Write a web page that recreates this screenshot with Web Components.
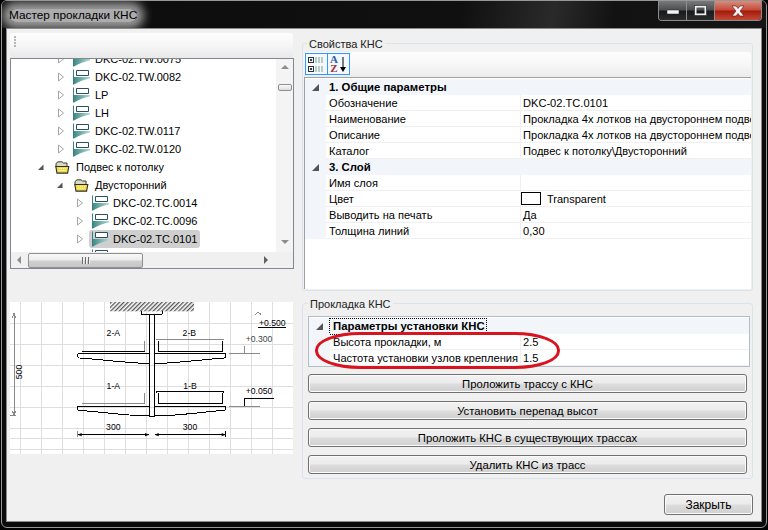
<!DOCTYPE html>
<html>
<head>
<meta charset="utf-8">
<title>Мастер прокладки КНС</title>
<style>
  html, body { margin: 0; padding: 0; background: #000; }
  body { width: 768px; height: 530px; overflow: hidden; font: 11.2px "Liberation Sans", sans-serif; color: #000; }
</style>
</head>
<body>
<kns-window caption="Мастер прокладки КНС">
  <div slot="left">
    <tree-panel>
      <tree-item level="1" kind="tray" arrow="open">DKC-02.TW.0075</tree-item>
      <tree-item level="1" kind="tray" arrow="open">DKC-02.TW.0082</tree-item>
      <tree-item level="1" kind="tray" arrow="open">LP</tree-item>
      <tree-item level="1" kind="tray" arrow="open">LH</tree-item>
      <tree-item level="1" kind="tray" arrow="open">DKC-02.TW.0117</tree-item>
      <tree-item level="1" kind="tray" arrow="open">DKC-02.TW.0120</tree-item>
      <tree-item level="0" kind="folder" arrow="solid">Подвес к потолку</tree-item>
      <tree-item level="1" kind="folder" arrow="solid">Двусторонний</tree-item>
      <tree-item level="2" kind="tray" arrow="open">DKC-02.TC.0014</tree-item>
      <tree-item level="2" kind="tray" arrow="open">DKC-02.TC.0096</tree-item>
      <tree-item level="2" kind="tray" arrow="open" selected>DKC-02.TC.0101</tree-item>
      <tree-item level="2" kind="tray"></tree-item>
    </tree-panel>
    <scheme-view></scheme-view>
  </div>
  <div slot="right">
    <group-box caption="Свойства КНС" style="height:248px;--cap-left:4px">
      <sort-toolbar></sort-toolbar>
      <prop-grid style="height:212px;padding-top:1px">
        <prop-head>1. Общие параметры</prop-head>
        <prop-row name="Обозначение">DKC-02.TC.0101</prop-row>
        <prop-row name="Наименование">Прокладка 4х лотков на двустороннем подвесе</prop-row>
        <prop-row name="Описание">Прокладка 4х лотков на двустороннем подвесе</prop-row>
        <prop-row name="Каталог">Подвес к потолку\Двусторонний</prop-row>
        <prop-head>3. Слой</prop-head>
        <prop-row name="Имя слоя"></prop-row>
        <prop-row name="Цвет"><color-chip>Transparent</color-chip></prop-row>
        <prop-row name="Выводить на печать">Да</prop-row>
        <prop-row name="Толщина линий">0,30</prop-row>
      </prop-grid>
    </group-box>
    <group-box caption="Прокладка КНС" style="height:176px;margin-top:12px" variant="inset">
      <prop-grid style="height:51px;margin-top:6px;--nw:190px" compact>
        <prop-head focus>Параметры установки КНС</prop-head>
        <prop-row name="Высота прокладки, м">2.5</prop-row>
        <prop-row name="Частота установки узлов крепления">1.5</prop-row>
        <red-ring></red-ring>
      </prop-grid>
      <win-button style="margin-top:7px">Проложить трассу с КНС</win-button>
      <win-button style="margin-top:8px">Установить перепад высот</win-button>
      <win-button style="margin-top:8px">Проложить КНС в существующих трассах</win-button>
      <win-button style="margin-top:8px">Удалить КНС из трасс</win-button>
    </group-box>
    <div style="display:flex;justify-content:flex-end;margin-top:15px;width:451px">
      <win-button style="width:89px;height:21px;flex:none;font-size:12px">Закрыть</win-button>
    </div>
  </div>
</kns-window>

<script>
function define(name, css, html, setup) {
  customElements.define(name, class extends HTMLElement {
    connectedCallback() {
      if (this.shadowRoot) return;
      const root = this.attachShadow({ mode: 'open' });
      const body = typeof html === 'function' ? html(this) : html;
      root.innerHTML = '<style>' + css + '</style>' + body;
      if (setup) setup(this, root);
    }
  });
}

// Main window
define('kns-window', `
  :host { display: block; width: 768px; height: 530px; background: #020202; overflow: hidden; }
  .frame { margin: 0 1px; height: 528px; box-sizing: border-box; border: 1px solid #979797; border-radius: 6px; background: #0a0a0a; overflow: hidden; }
  .title { height: 27px; display: flex; align-items: flex-start; justify-content: space-between; overflow: hidden;
    background: linear-gradient(100deg, #0c0c0c 0, #101010 60%, #2a2a2a 72%, #121212 80%, #151515 100%); }
  .cap { margin: 8px 0 0 7px; height: 13px; line-height: 13px; font-size: 11.8px; background: rgba(190,190,190,.9); box-shadow: 0 0 10px 7px rgba(190,190,190,.8); border-radius: 7px; }
  .btns { display: flex; margin: 0 4px 0 0; height: 20px; border: 1px solid #8d8d8d; border-top: 0; border-radius: 0 0 4px 4px; overflow: hidden; box-sizing: border-box; width: 104px; }
  .btns div { display: flex; align-items: center; justify-content: center; border-right: 1px solid #8d8d8d;
    background: linear-gradient(#77797c, #4b4d50 48%, #17191b 52%, #2a2c2e); }
  .min, .max { width: 27px; }
  .close { flex: 1; border-right: 0 !important; background: linear-gradient(#d98c7f, #c44a38 48%, #a4190c 52%, #c24a35) !important; }
  .client { margin: 0 4px; height: 494px; box-sizing: border-box; border: 1px solid #8b8b8b; background: #f0f0f0; display: grid; grid-template-columns: 287px 1fr; }
  .left { padding: 4px 0 0 3px; }
  .right { padding: 14px 0 0 8px; }
`, w => `
  <div class="frame">
    <div class="title">
      <span class="cap">${w.getAttribute('caption')}</span>
      <div class="btns">
        <div class="min"><svg width="12" height="6"><rect x="0" y="2" width="12" height="4" fill="#f4f4f4" stroke="#222" stroke-width=".5"/></svg></div>
        <div class="max"><svg width="13" height="11"><rect x="1.5" y="1.5" width="10" height="8" fill="none" stroke="#f0f0f0" stroke-width="2"/><rect x=".5" y=".5" width="12" height="10" fill="none" stroke="#222" stroke-width=".6"/></svg></div>
        <div class="close"><svg width="18" height="12" viewBox="0 0 18 12"><path d="M3 1h4l2 2.5L11 1h4l-4 5 4 5h-4L9 8.5 7 11H3l4-5z" fill="#f6f6f6" stroke="#5c1a12" stroke-width=".6"/></svg></div>
      </div>
    </div>
    <div class="client">
      <div class="left"><slot name="left"></slot></div>
      <div class="right"><slot name="right"></slot></div>
    </div>
  </div>`);

// Tree on the left with toolbar and scrollbars
define('tree-panel', `
  :host { display: block; width: 284px; }
  .bar { height: 25px; margin-right: 1px; box-sizing: border-box; padding: 3px 0 0 4px; border-radius: 3px 3px 0 0; background: linear-gradient(#fdfdfd, #f6f6f6 50%, #e9e9e9); }
  .bar i { display: block; width: 2px; height: 2px; background: #b5b5b5; margin-bottom: 1px; }
  .box { height: 211px; box-sizing: border-box; border: 1px solid #828790; background: #fff; display: grid; grid-template-columns: 1fr 17px; grid-template-rows: 193px 16px; }
  .view { overflow: hidden; grid-column: 1; grid-row: 1; }
  .inner { margin-top: -9px; }
  .v { grid-column: 2; grid-row: 1; background: #f4f4f4; display: flex; flex-direction: column; align-items: center; }
  .h { grid-column: 1; grid-row: 2; background: #f0f0f0; display: flex; align-items: center; }
  .c { grid-column: 2; grid-row: 2; background: #f0f0f0; }
  .up { margin-top: 6px; width: 0; height: 0; border: 4px solid transparent; border-top: 0; border-bottom-color: #8d8d8d; }
  .dn { margin-top: 149px; width: 0; height: 0; border: 4px solid transparent; border-bottom: 0; border-top-color: #8d8d8d; }
  .vt { margin-top: 15px; width: 14px; height: 7px; box-sizing: border-box; border: 1px solid #8f8f8f; border-radius: 2px; background: linear-gradient(#fafafa, #dcdcdc); }
  .lf { margin-left: 6px; width: 0; height: 0; border: 4px solid transparent; border-left: 0; border-right-color: #8d8d8d; }
  .rt { margin-left: 121px; width: 0; height: 0; border: 4px solid transparent; border-right: 0; border-left-color: #606060; }
  .ht { margin-left: 7px; width: 115px; height: 15px; flex: none; box-sizing: border-box; border: 1px solid #8f8f8f; border-radius: 2px; background: linear-gradient(#f8f8f8, #ededed 48%, #d0d0d0 52%, #c6c6c6); display: flex; align-items: center; justify-content: center; gap: 1px; }
  .ht b { width: 1px; height: 7px; background: #6b6b6b; box-shadow: 1px 0 #eee; margin-right: 1px; }
`, `
  <div class="bar"><i></i><i></i><i></i><i></i></div>
  <div class="box">
    <div class="view"><div class="inner"><slot></slot></div></div>
    <div class="v"><div class="up"></div><div class="vt"></div><div class="dn"></div></div>
    <div class="h"><div class="lf"></div><div class="ht"><b></b><b></b><b></b></div><div class="rt"></div></div>
    <div class="c"></div>
  </div>`);

define('tree-item', `
  :host { display: flex; align-items: center; height: 18px; white-space: nowrap; font-size: 11px; }
  .arr { width: 8px; height: 10px; flex: none; }
  .ico { flex: none; display: block; }
  .lab { display: flex; align-items: center; height: 18px; padding-right: 3px; }
  .wrap { display: flex; align-items: center; height: 18px; border-radius: 3px; padding-left: 3px; }
  .sel { background: #cfcfcf; }
`, it => {
  const level = +it.getAttribute('level');
  const tray = it.getAttribute('kind') === 'tray';
  const a = it.getAttribute('arrow');
  const left = { 0: 26, 1: tray ? 46 : 45, 2: 65 }[level];
  const arrow = a === 'open'
    ? '<svg class="arr" viewBox="0 0 8 10"><path d="M1.5 1v8l5-4z" fill="#fff" stroke="#a6a6a6"/></svg>'
    : a === 'solid'
      ? '<svg class="arr" viewBox="0 0 8 10"><path d="M6.5 2.5v5.5H1z" fill="#555"/></svg>'
      : '<span class="arr"></span>';
  const icon = tray
    ? `<svg class="ico" width="17" height="16" viewBox="0 0 17 16">
        <defs><linearGradient id="t" x1="0" y1="0" x2="1" y2="0"><stop offset="0" stop-color="#3f8b88"/><stop offset="1" stop-color="#b4dad3"/></linearGradient></defs>
        <path d="M.5 .5V15.5" stroke="#3c7d80" stroke-width="1"/>
        <path d="M1 8H17V9.5C11 10.5 6 12.5 1 15.5z" fill="url(#t)"/>
        <path d="M3.5 1.5H15.5V6.5H3.5z" fill="#fff" stroke="#2a4f63" stroke-width="1"/>
      </svg>`
    : `<svg class="ico" width="15" height="13" viewBox="0 0 15 13">
        <path d="M1 2.5L3 .8h4l1.5 1.2H12V6H1z" fill="#d9d9c8" stroke="#3d3d30" stroke-width="1"/>
        <path d="M.8 5.5h13l-1.2 6.6H2z" fill="#f0dc48" stroke="#2e2e26" stroke-width="1.1"/>
        <path d="M4 7.5h7M3.6 9.5h7.5" stroke="#fffbd0" stroke-width="1" stroke-dasharray="1 1"/>
      </svg>`;
  const selected = it.hasAttribute('selected') ? ' sel' : '';
  const pad = tray ? (level === 2 ? 4 : 5) : 6;
  return `<span style="width:${left}px;flex:none"></span>${arrow}
    <div class="wrap${selected}" style="margin-left:${tray ? 5 : 7}px">${icon}
      <span class="lab" style="padding-left:${pad}px"><slot></slot></span></div>`;
});

// Drawing of the suspension
define('scheme-view', `
  :host { display: block; width: 283px; height: 152px; margin-top: 33px; }
  svg { display: block; }
  text { font-family: "Liberation Sans", sans-serif; font-size: 26px; text-anchor: middle; }
`, (() => {
  let grid = '';
  for (let x = 65; x < 882; x += 63) grid += `<path d="M${x} 22V477"/>`;
  [85, 148, 211, 274, 337, 400, 432, 463].forEach(y => { grid += `<path d="M33 ${y}H882"/>`; });
  return `<svg width="283" height="152" viewBox="33 22 849 456">
    <defs><pattern id="h" width="9" height="9" patternUnits="userSpaceOnUse" patternTransform="rotate(45)"><rect width="9" height="9" fill="#fff"/><rect width="4" height="9" fill="#555"/></pattern></defs>
    <rect x="33" y="22" width="849" height="456" fill="#fff"/>
    <g stroke="#dedede" stroke-width="3" shape-rendering="crispEdges">${grid}</g>
    <rect x="333" y="22" width="252" height="28" fill="url(#h)"/>
    <g fill="none" stroke="#000" stroke-width="3" shape-rendering="crispEdges">
      <path d="M427 50V56Q427 60 432 60H485Q490 60 490 56V50"/>
      <path d="M451 60V364H467V60"/>
      <path d="M451 175H241Q236 175 236 182Q236 190 241 190C310 195 390 205 451 207"/>
      <path d="M467 175H680V182Q680 190 675 190C610 195 530 205 467 207"/>
      <path d="M451 334H236V344Q236 347 241 347C310 352 390 364 451 364"/>
      <path d="M467 334H680V344Q680 347 675 347C610 352 530 364 467 364"/>
      <path d="M250 169H437" />
      <path d="M478 140V169H670V140"/>
      <path d="M472 296V290H674V296"/>
      <path d="M478 296V327H670V296"/>
      <path d="M236 420H450M467 420H680M680 408V428"/>
      <path d="M778 97H860M735 334V310H825"/>
    </g>
    <path d="M236 420l12-5v10zM450 420l-12-5v10zM467 420l12-5v10zM680 420l-12-5v10z" fill="#000"/>
    <g fill="none" stroke="#8a8a8a" stroke-width="3" shape-rendering="crispEdges">
      <path d="M437 140V169M472 133H674M250 327H437V296M236 408V428"/>
      <path d="M45 55V362M34 362H50"/>
      <path d="M690 175H782M737 153V175M690 334H782"/>
      <path d="M768 60L777 52L787 60"/>
      <path d="M40 70L45 55L50 70M40 348L45 362L50 348"/>
    </g>
    <g>
      <text x="343" y="125">2-А</text><text x="571" y="125">2-В</text>
      <text x="343" y="282">1-А</text><text x="573" y="282">1-В</text>
      <text x="343" y="407">300</text><text x="573" y="407">300</text>
      <text x="820" y="95">+0.500</text><text x="780" y="141" fill="#444">+0.300</text><text x="780" y="299">+0.050</text>
      <text transform="translate(68 232) rotate(-90)">500</text>
    </g>
  </svg>`;
})());

define('group-box', `
  :host { display: block; box-sizing: border-box; width: 451px; border: 1px solid #dbe3ea; border-radius: 3px; position: relative; padding: 8px 1px 0 1px; }
  .cap { position: absolute; left: var(--cap-left, 5px); top: -8px; background: #f0f0f0; padding: 0 2px; line-height: 16px; font-size: 11px; color: #222; }
  :host([variant=inset]) { padding: 6px 5px 0 5px; }
`, g => `<span class="cap">${g.getAttribute('caption')}</span><slot></slot>`);

define('sort-toolbar', `
  :host { display: flex; height: 25px; box-sizing: border-box; padding: 1px 0 0 1px; width: 447px; background: linear-gradient(#fdfdfd, #f7f7f7 50%, #ececec); border-radius: 3px 3px 0 0; }
  .b { width: 23px; height: 22px; box-sizing: border-box; border: 1px solid #3399ff; background: #f2f8fd; display: flex; align-items: center; justify-content: center; margin-right: -1px; }
  .az { font: bold 11px/9px "Liberation Serif", serif; text-align: center; margin-right: 1px; }
`, `
  <div class="b"><svg width="19" height="17" viewBox="0 0 19 17">
    <g fill="#eaf3fb" stroke="#333"><rect x="1.5" y="1.5" width="5" height="5"/><rect x="1.5" y="10.5" width="5" height="5"/></g>
    <path d="M3 4h2M4 3v2M3 13h2M4 12v2" stroke="#000"/>
    <path d="M8 2h9M8 4h9M8 6h9M8 11h9M8 13h9M8 15h9" stroke="#7fa08a" stroke-dasharray="2 1"/>
  </svg></div>
  <div class="b"><span class="az"><span style="color:#2f5fa8">A</span><br><span style="color:#a03030">Z</span></span>
    <svg width="8" height="17" viewBox="0 0 8 17"><path d="M4 1V14" stroke="#000"/><path d="M1 11h6l-3 5z" fill="#000"/></svg></div>`);

define('prop-grid', `
  :host { display: block; box-sizing: border-box; width: 447px; background: #fff; border-top: 1px solid #a0a0a0; border-left: 1px solid #a0a0a0; position: relative; padding-top: 1px; overflow: hidden; }
  :host([compact]) { width: 442px; border: 1px solid #b4bcc6; overflow: visible; }
`, `<slot></slot>`);

define('prop-head', `
  :host { display: flex; align-items: center; height: 16px; background: #f2f6fb; font-weight: bold; font-size: 11.35px; white-space: nowrap; }
  .a { width: 21px; flex: none; display: flex; justify-content: center; }
  span.t { padding: 0 1px 0 3px; line-height: 15px; }
  :host([focus]) span.t { outline: 1px dotted #000; }
`, `<span class="a"><svg width="7" height="7"><path d="M7 0v7H0z" fill="#555"/></svg></span><span class="t"><slot></slot></span>`);

define('prop-row', `
  :host { display: grid; grid-template-columns: 21px var(--nw, 194px) 1fr; height: 16px; box-sizing: border-box; font-size: 11.1px; white-space: nowrap; line-height: 14px; }
  .g { background: #f2f6fb; }
  .n, .v { overflow: hidden; box-sizing: border-box; height: 16px; border-bottom: 1px solid #f0f0f0; padding: 1px 0 0 3px; }
  .v { border-left: 1px solid #f0f0f0; padding-left: 2px; }
`, r => `<span class="g"></span><span class="n">${r.getAttribute('name')}</span><span class="v"><slot></slot></span>`);

define('color-chip', `
  :host { display: inline-flex; align-items: center; gap: 6px; height: 14px; font-size: 11px; margin-left: -2px; }
  i { display: block; width: 20px; height: 13px; margin-bottom: 1px; box-sizing: border-box; border: 1px solid #000; background: #fff; }
`, `<i></i><slot></slot>`);

define('red-ring', `
  :host { position: absolute; left: 6px; top: 15px; width: 245px; height: 37px; box-sizing: border-box; border: 3px solid #d8141f; border-radius: 45px / 18px; pointer-events: none; }
`, ``);

define('win-button', `
  :host { display: flex; align-items: center; justify-content: center; width: 439px; height: 19px; box-sizing: border-box; border: 1px solid #707070; border-radius: 3px;
    background: linear-gradient(#f2f2f2, #ebebeb 48%, #dddddd 52%, #cfcfcf); box-shadow: inset 0 0 0 1px #fbfbfb; font-size: 11.3px; white-space: nowrap; }
`, `<slot></slot>`);
</script>
</body>
</html>
